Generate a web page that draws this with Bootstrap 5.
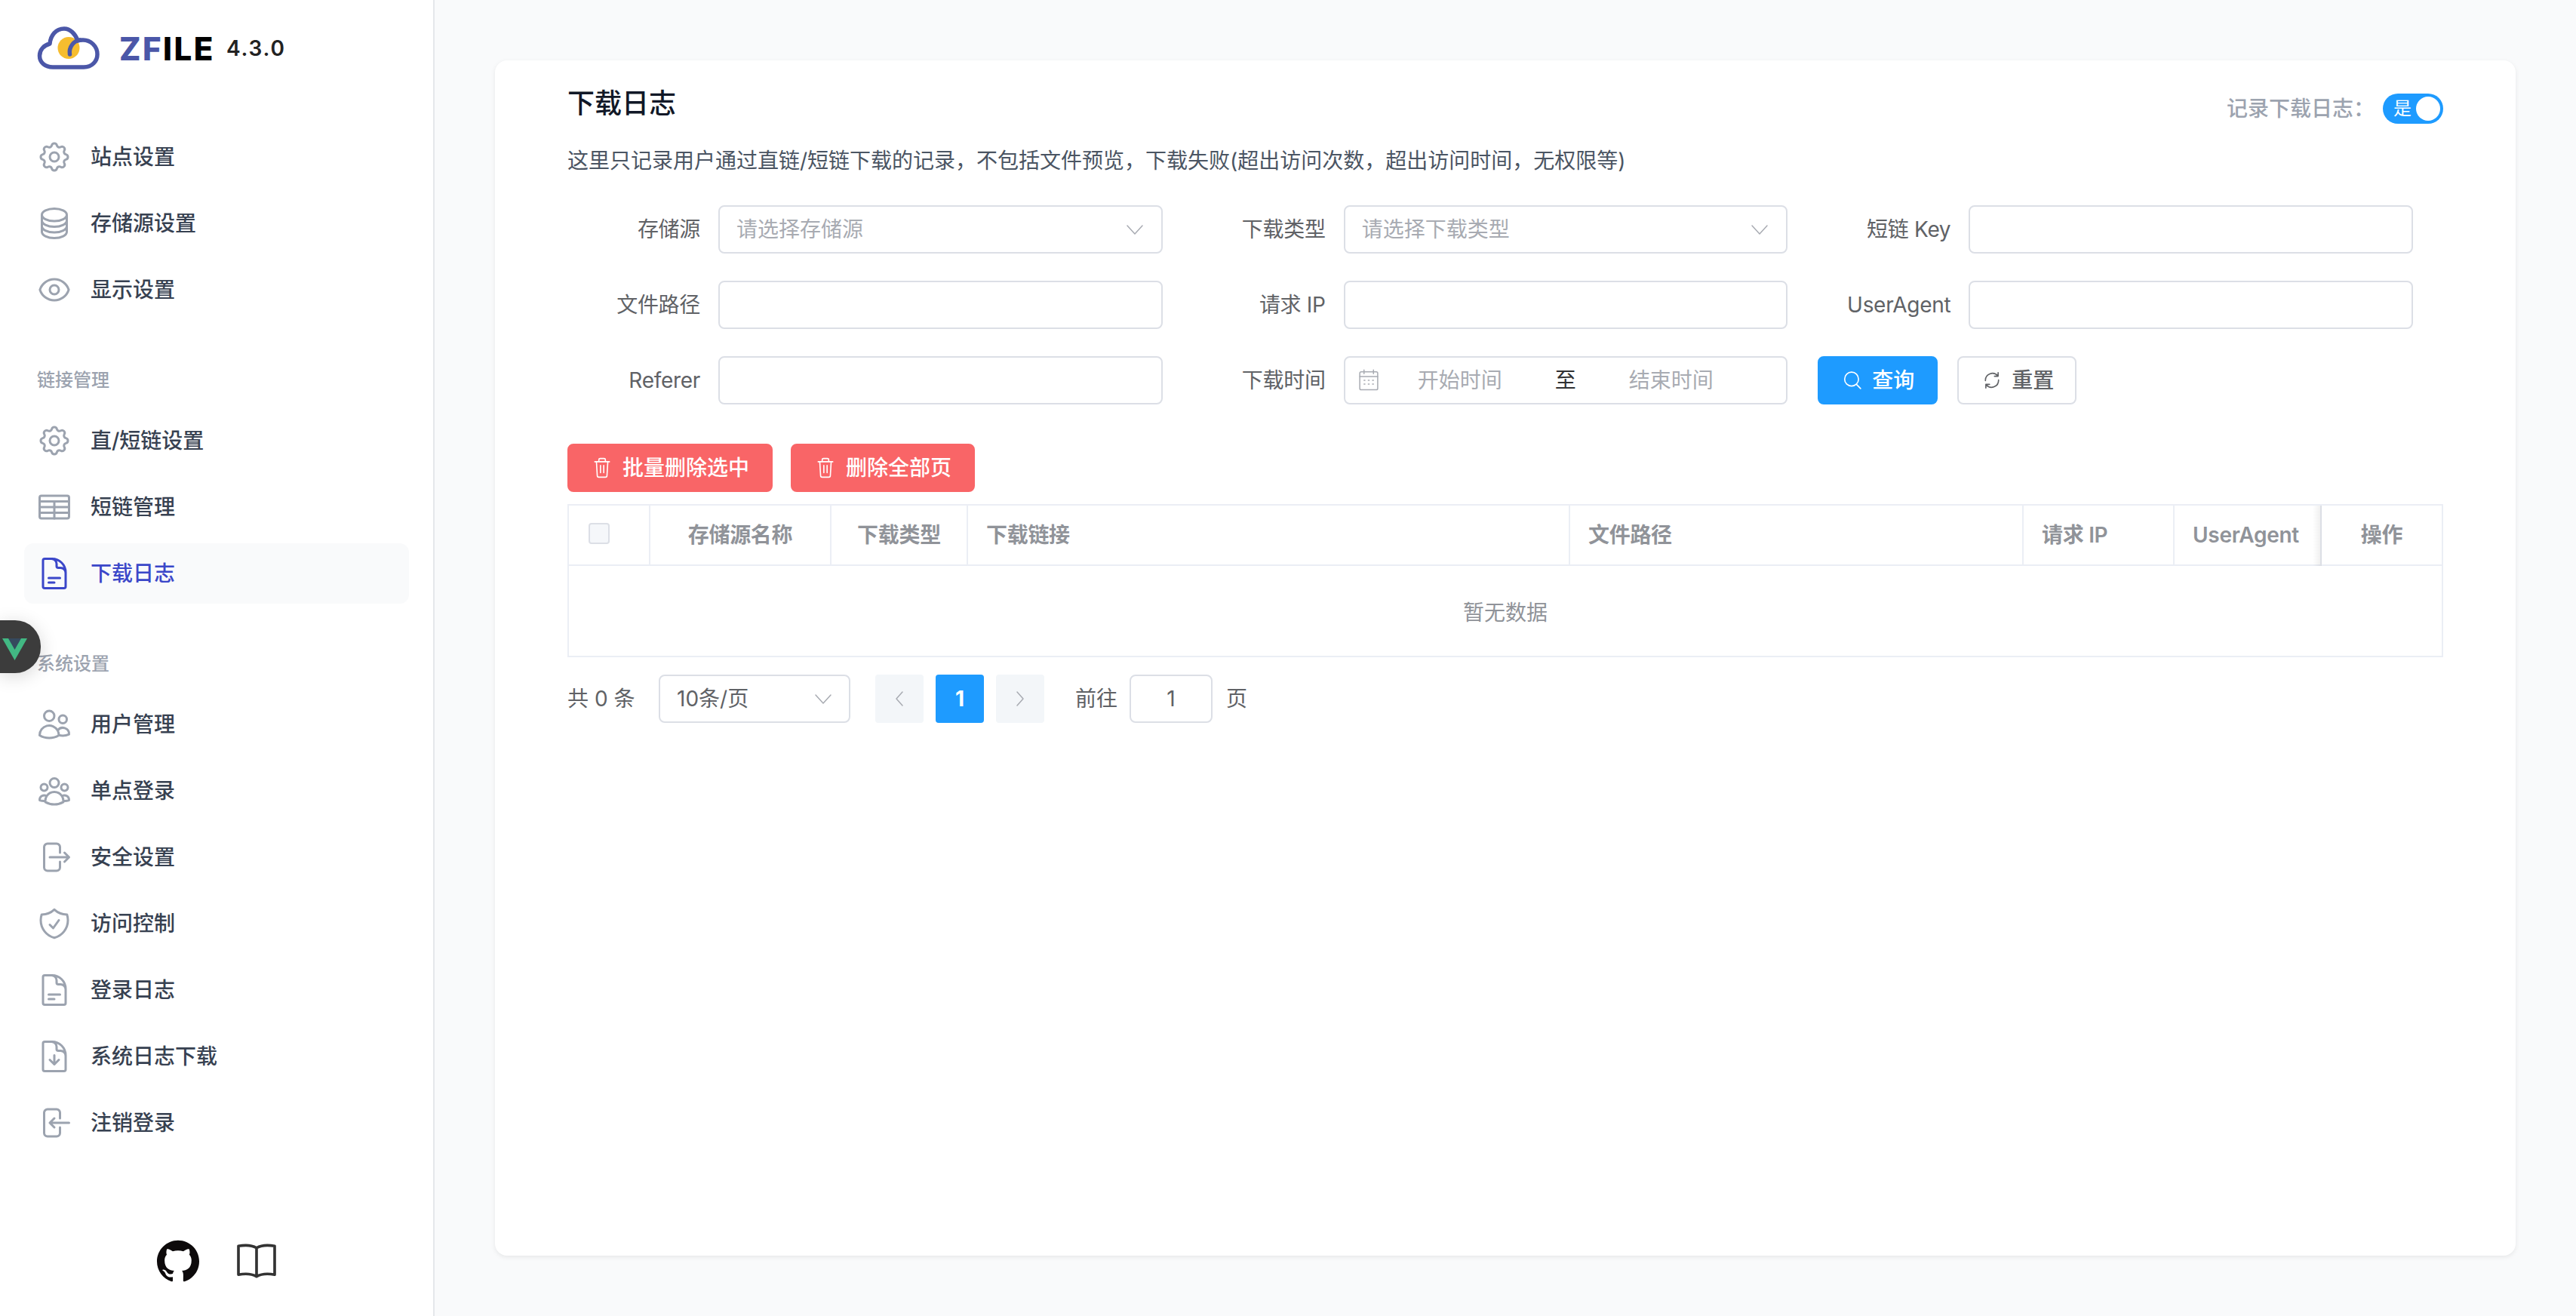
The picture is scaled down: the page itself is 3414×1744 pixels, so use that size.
<!DOCTYPE html>
<html lang="zh-CN">
<head>
<meta charset="utf-8">
<title>ZFILE 下载日志</title>
<link href="https://cdn.jsdelivr.net/npm/bootstrap@5.3.0/dist/css/bootstrap.min.css" rel="stylesheet">
<style>
html,body{height:100%;overflow:hidden}
body{font-family:Inter,"Noto Sans CJK SC",sans-serif;font-size:28px;background:#f9fafb;color:#606266;line-height:1.5}
.shell{height:1744px}
.side{width:576px;flex:none;background:#fff;border-right:2px solid #e5e7eb;padding:0 32px}
.brand{height:168px;padding:33px 0 0 16px;align-items:flex-start}
.brand-logo{width:86px;height:62px;flex:none}
.brand-name{font-family:Inter,sans-serif;font-weight:800;font-size:42px;line-height:1;letter-spacing:2.5px;margin:11px 0 0 24px;color:#000}
.brand-name span{color:#4b57a8}
.brand-ver{font-family:Inter,sans-serif;font-weight:600;font-size:28px;line-height:1;letter-spacing:1.8px;margin:17px 0 0 15px;color:#222}
.menu-item{height:80px;margin-bottom:8px;padding-left:16px;border-radius:12px;font-weight:500;color:#374151;text-decoration:none;gap:24px}
.menu-item.on{background:#f9fafb;color:#3b47c9}
.menu-item svg{width:48px;height:48px;flex:none;stroke:#9ca3af;fill:none;stroke-width:1.5;stroke-linecap:round;stroke-linejoin:round}
.menu-item.on svg{stroke:#3b47c9}
.menu-head{height:32px;margin:56px 0 24px 17px;font-size:24px;line-height:32px;color:#9ca3af;font-weight:500}
.side-foot{margin-top:auto;height:144px;gap:50px;padding-bottom:2px}
.vue-tab{position:absolute;left:0;top:822px;width:54px;height:70px;background:#3c3c3c;border-radius:0 34px 34px 0;box-shadow:0 4px 24px rgba(0,0,0,.16);z-index:5}
.vue-tab svg{position:absolute;left:3px;top:24px;width:33px;height:29px}
.main-area{padding:80px;min-width:0}
.panel{height:1584px;background:#fff;border-radius:16px;box-shadow:0 2px 6px rgba(0,0,0,.08);padding:29px 96px 0}
.page-title{font-size:36px;line-height:56px;font-weight:500;color:#111827;margin:0}
.rec-switch{margin-top:15px;gap:30px;color:#9ca3af;font-weight:500;line-height:40px}
.rec-text{width:177px;white-space:nowrap}
.sw{width:80px;height:40px;border-radius:20px;background:#1e9bff;color:#fff;font-size:24px;line-height:40px;padding-left:14px;position:relative;font-weight:400}
.sw i{position:absolute;right:4px;top:4px;width:32px;height:32px;border-radius:50%;background:#fff}
.page-desc{margin:24px 0 35px;line-height:48px;color:#4b5563}
.frm-row{margin-bottom:36px;--bs-gutter-x:0;--bs-gutter-y:0}
.frm-cell{padding-right:40px}
.frm-label{width:200px;flex:none;text-align:right;padding-right:24px;line-height:64px;color:#606266;white-space:nowrap;letter-spacing:-.3px}
.frm-ctl{height:64px;border:2px solid #dcdfe6;border-radius:8px;background:#fff;padding:0 22px;font-size:28px;color:#a8abb2;min-width:0}
.frm-ctl svg{width:24px;height:24px;flex:none;fill:none;stroke:#a8abb2;stroke-width:1.5;stroke-linecap:round;stroke-linejoin:round}
.frm-ctl .chev{margin-right:1px}
.frm-input{box-shadow:none!important}
.date-ctl{padding:0 18px 0 16px}
.date-ctl .cal{width:30px;height:30px;stroke-width:1.2}
.date-ctl .to{color:#303133;width:26px;margin:0 72px 0 70px;flex:none}
.date-ctl .d1{margin-left:50px;width:112px;flex:none}
.b-base{height:64px;border-radius:8px;font-size:28px;font-weight:500;display:inline-flex;align-items:center;padding:0;border:2px solid transparent;line-height:1}
.b-base svg{fill:none;stroke:currentColor;stroke-width:1.5;stroke-linecap:round;stroke-linejoin:round;flex:none}
.b-query{width:159px;margin-left:0;background:#1e9bff;border-color:#1e9bff;color:#fff;padding-left:31px;gap:13px}
.b-reset{width:158px;margin-left:26px;background:#fff;border-color:#dcdfe6;color:#606266;padding-left:31px;gap:13px}
.b-del{background:#f96567;border-color:#f96567;color:#fff;padding:0 29px 0 31px;gap:14px}
.b-del svg{width:26px;height:28px}
.b-query svg,.b-reset svg{width:26px;height:26px}
.del-bar{margin-top:52px;gap:24px;margin-bottom:16px}
.grid-wrap{border:2px solid #ebeef5;position:relative}
.log-grid{table-layout:fixed;width:100%;border-collapse:separate;border-spacing:0;margin:0}
.log-grid th{height:80px;padding:0 24px;border-bottom:2px solid #ebeef5;border-right:2px solid #ebeef5;color:#909399;font-weight:600;font-size:28px;line-height:1;white-space:nowrap;background:#fff;position:relative;vertical-align:middle;letter-spacing:-.3px}
.log-grid th:last-child{border-right:0}
.log-grid td{height:119px;text-align:center;color:#909399;vertical-align:middle;padding:4px 0 0;border:0}
.c0{width:108px}.c1{width:240px}.c2{width:181px}.c3{width:798px}.c4{width:601px}.c5{width:200px}.c6{width:195px}
.ta-c{text-align:center}
.fix-col::before{content:"";position:absolute;left:-12px;top:0;bottom:-2px;width:12px;background:linear-gradient(to left,rgba(0,0,0,.07),rgba(0,0,0,0))}
.ck{display:block;width:28px;height:28px;border:2px solid #dcdfe6;border-radius:4px;background:#f5f7fa;margin:-4px 0 0 2px}
.pg{margin-top:23px;height:64px;color:#606266}
.pg-total{width:121px;flex:none}
.pg-size{width:254px;padding:0 22px 0 22px;color:#606266;flex:none}
.pg-btn{width:64px;height:64px;border-radius:4px;background:#f3f6f9;color:#a8abb2;flex:none}
.pg-btn svg{width:24px;height:24px;fill:none;stroke:#a8abb2;stroke-width:1.5;stroke-linecap:round;stroke-linejoin:round}
.pg-btn.on{background:#1e9bff;color:#fff;font-weight:700}
.pg-list{gap:16px;margin-left:33px}
.pg-go{margin:0 16px 0 41px}
.pg-num{width:110px;height:64px;border:2px solid #dcdfe6;border-radius:8px;color:#606266;flex:none}
.pg-end{margin-left:18px}
</style>
</head>
<body>
<div class="shell d-flex position-relative">
  <aside class="side d-flex flex-column">
    <div class="brand d-flex">
      <svg class="brand-logo" viewBox="48 33 86 62" aria-hidden="true"><circle cx="91" cy="63.500" r="14.500" fill="#f6bd2f"/><path d="M70 89H111C122 89 129 81 129 72C129 61 120 53 110 53C107 53 105 53 103 54C100 45 93 38 85 38C74 38 67 47 66 58C58 60 52.500 66 52.500 74C52.500 83 60 89 70 89Z" fill="none" stroke="#4b57a8" stroke-width="5.500" stroke-linejoin="round"/><path d="M92.500 72C91 62 98 54 106 53" fill="none" stroke="#4b57a8" stroke-width="5.500" stroke-linecap="round"/></svg>
      <div class="brand-name"><span>ZF</span>ILE</div>
      <div class="brand-ver">4.3.0</div>
    </div>
    <a class="menu-item d-flex align-items-center" href="#"><svg viewBox="0 0 24 24"><path d="M10.325 4.317c.426-1.756 2.924-1.756 3.35 0a1.724 1.724 0 002.573 1.066c1.543-.94 3.31.826 2.37 2.37a1.724 1.724 0 001.065 2.572c1.756.426 1.756 2.924 0 3.35a1.724 1.724 0 00-1.066 2.573c.94 1.543-.826 3.31-2.37 2.37a1.724 1.724 0 00-2.572 1.065c-.426 1.756-2.924 1.756-3.35 0a1.724 1.724 0 00-2.573-1.066c-1.543.94-3.31-.826-2.37-2.37a1.724 1.724 0 00-1.065-2.572c-1.756-.426-1.756-2.924 0-3.35a1.724 1.724 0 001.066-2.573c-.94-1.543.826-3.31 2.37-2.37.996.608 2.296.07 2.572-1.065z"/><path d="M15 12a3 3 0 11-6 0 3 3 0 016 0z"/></svg>站点设置</a>
    <a class="menu-item d-flex align-items-center" href="#"><svg viewBox="0 0 24 24"><path d="M20.25 6.375c0 2.278-3.694 4.125-8.25 4.125S3.75 8.653 3.75 6.375m16.5 0c0-2.278-3.694-4.125-8.25-4.125S3.75 4.097 3.75 6.375m16.5 0v11.25c0 2.278-3.694 4.125-8.25 4.125s-8.25-1.847-8.25-4.125V6.375m16.5 0v3.75m-16.5-3.75v3.75m16.5 0v3.75C20.25 16.153 16.556 18 12 18s-8.25-1.847-8.25-4.125v-3.75m16.5 0c0 2.278-3.694 4.125-8.25 4.125s-8.25-1.847-8.25-4.125"/></svg>存储源设置</a>
    <a class="menu-item d-flex align-items-center" href="#"><svg viewBox="0 0 24 24"><path d="M15 12a3 3 0 11-6 0 3 3 0 016 0z"/><path d="M2.458 12C3.732 7.943 7.523 5 12 5c4.478 0 8.268 2.943 9.542 7-1.274 4.057-5.064 7-9.542 7-4.477 0-8.268-2.943-9.542-7z"/></svg>显示设置</a>
    <div class="menu-head">链接管理</div>
    <a class="menu-item d-flex align-items-center" href="#"><svg viewBox="0 0 24 24"><path d="M10.325 4.317c.426-1.756 2.924-1.756 3.35 0a1.724 1.724 0 002.573 1.066c1.543-.94 3.31.826 2.37 2.37a1.724 1.724 0 001.065 2.572c1.756.426 1.756 2.924 0 3.35a1.724 1.724 0 00-1.066 2.573c.94 1.543-.826 3.31-2.37 2.37a1.724 1.724 0 00-2.572 1.065c-.426 1.756-2.924 1.756-3.35 0a1.724 1.724 0 00-2.573-1.066c-1.543.94-3.31-.826-2.37-2.37a1.724 1.724 0 00-1.065-2.572c-1.756-.426-1.756-2.924 0-3.35a1.724 1.724 0 001.066-2.573c-.94-1.543.826-3.31 2.37-2.37.996.608 2.296.07 2.572-1.065z"/><path d="M15 12a3 3 0 11-6 0 3 3 0 016 0z"/></svg>直/短链设置</a>
    <a class="menu-item d-flex align-items-center" href="#"><svg viewBox="0 0 24 24"><rect x="2.250" y="4.500" width="19.500" height="15" rx="1.200"/><path d="M2.250 8.250h19.500M2.250 12h19.500M2.250 15.750h19.500M12 8.250V19.500"/></svg>短链管理</a>
    <a class="menu-item on d-flex align-items-center" href="#"><svg viewBox="0 0 24 24"><path d="M19.5 14.25v-2.625a3.375 3.375 0 00-3.375-3.375h-1.5A1.125 1.125 0 0113.5 7.125v-1.5a3.375 3.375 0 00-3.375-3.375H8.25m0 12.75h7.5m-7.5 3H12M10.500 2.250H5.625c-.621 0-1.125.504-1.125 1.125v17.25c0 .621.504 1.125 1.125 1.125h12.75c.621 0 1.125-.504 1.125-1.125V11.25a9 9 0 00-9-9z"/></svg>下载日志</a>
    <div class="menu-head">系统设置</div>
    <a class="menu-item d-flex align-items-center" href="#"><svg viewBox="0 0 24 24"><path d="M15 19.128a9.38 9.38 0 002.625.372 9.337 9.337 0 004.121-.952 4.125 4.125 0 00-7.533-2.493M15 19.128v-.003c0-1.113-.285-2.16-.786-3.07M15 19.128v.106A12.318 12.318 0 018.624 21c-2.331 0-4.512-.645-6.374-1.766l-.001-.109a6.375 6.375 0 0111.964-3.07M12 6.375a3.375 3.375 0 11-6.75 0 3.375 3.375 0 016.75 0zm8.25 2.25a2.625 2.625 0 11-5.25 0 2.625 2.625 0 015.25 0z"/></svg>用户管理</a>
    <a class="menu-item d-flex align-items-center" href="#"><svg viewBox="0 0 24 24"><path d="M18 18.72a9.094 9.094 0 003.741-.479 3 3 0 00-4.682-2.72m.94 3.198l.001.031c0 .225-.012.447-.037.666A11.944 11.944 0 0112 21c-2.17 0-4.207-.576-5.963-1.584A6.062 6.062 0 016 18.719m12 0a5.971 5.971 0 00-.941-3.197m0 0A5.995 5.995 0 0012 12.75a5.995 5.995 0 00-5.058 2.772m0 0a3 3 0 00-4.681 2.72 8.986 8.986 0 003.74.477m.94-3.197a5.971 5.971 0 00-.94 3.197M15 6.75a3 3 0 11-6 0 3 3 0 016 0zm6 3a2.25 2.25 0 11-4.5 0 2.25 2.25 0 014.5 0zm-13.5 0a2.25 2.25 0 11-4.5 0 2.25 2.25 0 014.5 0z"/></svg>单点登录</a>
    <a class="menu-item d-flex align-items-center" href="#"><svg viewBox="0 0 24 24"><path d="M15.75 9V5.25A2.25 2.25 0 0013.5 3h-6a2.25 2.25 0 00-2.25 2.25v13.5A2.25 2.25 0 007.5 21h6a2.25 2.25 0 002.25-2.25V15m3 0l3-3m0 0l-3-3m3 3H9"/></svg>安全设置</a>
    <a class="menu-item d-flex align-items-center" href="#"><svg viewBox="0 0 24 24"><path d="M9 12.75L11.25 15 15 9.75m-3-7.036A11.959 11.959 0 013.598 6 11.99 11.99 0 003 9.749c0 5.592 3.824 10.29 9 11.623 5.176-1.332 9-6.03 9-11.622 0-1.31-.21-2.571-.598-3.751h-.152c-3.196 0-6.1-1.248-8.25-3.285z"/></svg>访问控制</a>
    <a class="menu-item d-flex align-items-center" href="#"><svg viewBox="0 0 24 24"><path d="M19.5 14.25v-2.625a3.375 3.375 0 00-3.375-3.375h-1.5A1.125 1.125 0 0113.5 7.125v-1.5a3.375 3.375 0 00-3.375-3.375H8.25m0 12.75h7.5m-7.5 3H12M10.500 2.250H5.625c-.621 0-1.125.504-1.125 1.125v17.25c0 .621.504 1.125 1.125 1.125h12.75c.621 0 1.125-.504 1.125-1.125V11.25a9 9 0 00-9-9z"/></svg>登录日志</a>
    <a class="menu-item d-flex align-items-center" href="#"><svg viewBox="0 0 24 24"><path d="M19.5 14.25v-2.625a3.375 3.375 0 00-3.375-3.375h-1.5A1.125 1.125 0 0113.5 7.125v-1.5a3.375 3.375 0 00-3.375-3.375H8.25m.75 12l3 3m0 0l3-3m-3 3v-6m-1.5-9H5.625c-.621 0-1.125.504-1.125 1.125v17.25c0 .621.504 1.125 1.125 1.125h12.75c.621 0 1.125-.504 1.125-1.125V11.25a9 9 0 00-9-9z"/></svg>系统日志下载</a>
    <a class="menu-item d-flex align-items-center" href="#"><svg viewBox="0 0 24 24"><path d="M15.75 9V5.25A2.25 2.25 0 0013.5 3h-6a2.25 2.25 0 00-2.25 2.25v13.5A2.25 2.25 0 007.5 21h6a2.25 2.25 0 002.25-2.25V15M12 9l-3 3m0 0l3 3m-3-3h12.75"/></svg>注销登录</a>
    <div class="side-foot d-flex justify-content-center align-items-center">
      <svg width="56" height="56" viewBox="0 0 24 24" fill="#0d0a0b" aria-hidden="true"><path d="M12 .297c-6.63 0-12 5.373-12 12 0 5.303 3.438 9.8 8.205 11.385.6.113.82-.258.82-.577 0-.285-.01-1.04-.015-2.04-3.338.724-4.042-1.61-4.042-1.61C4.422 18.07 3.633 17.7 3.633 17.7c-1.087-.744.084-.729.084-.729 1.205.084 1.838 1.236 1.838 1.236 1.07 1.835 2.809 1.305 3.495.998.108-.776.417-1.305.76-1.605-2.665-.3-5.466-1.332-5.466-5.93 0-1.31.465-2.38 1.235-3.22-.135-.303-.54-1.523.105-3.176 0 0 1.005-.322 3.3 1.23.96-.267 1.98-.399 3-.405 1.02.006 2.04.138 3 .405 2.28-1.552 3.285-1.23 3.285-1.23.645 1.653.24 2.873.12 3.176.765.84 1.23 1.91 1.23 3.22 0 4.61-2.805 5.625-5.475 5.92.42.36.81 1.096.81 2.22 0 1.606-.015 2.896-.03 3.286 0 .315.21.69.825.57C20.565 22.092 24 17.592 24 12.297c0-6.627-5.373-12-12-12"/></svg>
      <svg width="52" height="48" viewBox="0 0 54 50" fill="none" stroke="#333" stroke-width="3.800" stroke-linejoin="round" aria-hidden="true"><path d="M27 7C20 3 10 3 2 4.500V44c8-1.500 18-1.500 25 2.500 7-4 17-4 25-2.500V4.500C44 3 34 3 27 7zM27 7v39.500"/></svg>
    </div>
  </aside>
  <div class="vue-tab"><svg viewBox="0 0 33 29"><path d="M0 0h33L16.500 29z" fill="#42b883"/><path d="M8 0h17l-8.500 15z" fill="#35495e"/></svg></div>
  <main class="main-area flex-grow-1">
    <section class="panel">
      <div class="d-flex justify-content-between align-items-start">
        <h1 class="page-title">下载日志</h1>
        <div class="rec-switch d-flex align-items-center"><span class="rec-text">记录下载日志：</span><span class="sw">是<i></i></span></div>
      </div>
      <p class="page-desc">这里只记录用户通过直链/短链下载的记录，不包括文件预览，下载失败(超出访问次数，超出访问时间，无权限等)</p>

      <div class="row frm-row">
        <div class="col-4 frm-cell d-flex"><label class="frm-label">存储源</label><div class="frm-ctl flex-grow-1 d-flex align-items-center justify-content-between"><span>请选择存储源</span><svg class="chev" viewBox="0 0 24 24"><path d="M2 7l10 11L22 7"/></svg></div></div>
        <div class="col-4 frm-cell d-flex"><label class="frm-label">下载类型</label><div class="frm-ctl flex-grow-1 d-flex align-items-center justify-content-between"><span>请选择下载类型</span><svg class="chev" viewBox="0 0 24 24"><path d="M2 7l10 11L22 7"/></svg></div></div>
        <div class="col-4 frm-cell d-flex"><label class="frm-label">短链 Key</label><input class="frm-ctl frm-input flex-grow-1" type="text"></div>
      </div>
      <div class="row frm-row">
        <div class="col-4 frm-cell d-flex"><label class="frm-label">文件路径</label><input class="frm-ctl frm-input flex-grow-1" type="text"></div>
        <div class="col-4 frm-cell d-flex"><label class="frm-label">请求 IP</label><input class="frm-ctl frm-input flex-grow-1" type="text"></div>
        <div class="col-4 frm-cell d-flex"><label class="frm-label">UserAgent</label><input class="frm-ctl frm-input flex-grow-1" type="text"></div>
      </div>
      <div class="row frm-row mb-0">
        <div class="col-4 frm-cell d-flex"><label class="frm-label">Referer</label><input class="frm-ctl frm-input flex-grow-1" type="text"></div>
        <div class="col-4 frm-cell d-flex"><label class="frm-label">下载时间</label><div class="frm-ctl date-ctl flex-grow-1 d-flex align-items-center"><svg class="cal" viewBox="0 0 24 24"><rect x="2.500" y="3" width="19" height="19" rx="1.500"/><path d="M2.500 8h19M7 1v4M17 1v4M7 12h1M11.500 12h1M16 12h1M7 16h1M11.500 16h1M16 16h1"/></svg><span class="d1">开始时间</span><span class="to">至</span><span>结束时间</span></div></div>
        <div class="col-4 d-flex">
          <button class="btn b-base b-query" type="button"><svg viewBox="0 0 24 24"><circle cx="11" cy="10.500" r="8.500"/><path d="M17 17l5 5"/></svg>查询</button>
          <button class="btn b-base b-reset" type="button"><svg viewBox="0 0 24 24"><path d="M4 12.500A8.500 8.500 0 0 1 19 6.500M20 11.500A8.500 8.500 0 0 1 5 17.500M19.500 2.500v4.500H15M4.500 21.500V17H9"/></svg>重置</button>
        </div>
      </div>

      <div class="del-bar d-flex">
        <button class="btn b-base b-del" type="button"><svg viewBox="0 0 24 26"><path d="M3 5.500h18M8 5.500V3a1.500 1.500 0 0 1 1.500-1.500h5A1.500 1.500 0 0 1 16 3v2.500M5 5.500l1 17a2 2 0 0 0 2 2h8a2 2 0 0 0 2-2l1-17M10 10v9M14 10v9"/></svg>批量删除选中</button>
        <button class="btn b-base b-del" type="button"><svg viewBox="0 0 24 26"><path d="M3 5.500h18M8 5.500V3a1.500 1.500 0 0 1 1.500-1.500h5A1.500 1.500 0 0 1 16 3v2.500M5 5.500l1 17a2 2 0 0 0 2 2h8a2 2 0 0 0 2-2l1-17M10 10v9M14 10v9"/></svg>删除全部页</button>
      </div>

      <div class="grid-wrap">
        <table class="log-grid">
          <colgroup><col class="c0"><col class="c1"><col class="c2"><col class="c3"><col class="c4"><col class="c5"><col class="c6"><col></colgroup>
          <thead><tr>
            <th><span class="ck"></span></th>
            <th class="ta-c">存储源名称</th>
            <th class="ta-c">下载类型</th>
            <th>下载链接</th>
            <th>文件路径</th>
            <th>请求 IP</th>
            <th>UserAgent</th>
            <th class="ta-c fix-col">操作</th>
          </tr></thead>
          <tbody><tr><td colspan="8">暂无数据</td></tr></tbody>
        </table>
      </div>

      <div class="pg d-flex align-items-center">
        <span class="pg-total">共 0 条</span>
        <div class="frm-ctl pg-size d-flex align-items-center justify-content-between"><span>10条/页</span><svg viewBox="0 0 24 24"><path d="M2 7l10 11L22 7"/></svg></div>
        <div class="pg-list d-flex">
          <span class="pg-btn d-flex align-items-center justify-content-center"><svg viewBox="0 0 24 24"><path d="M16 3l-8 9 8 9"/></svg></span>
          <span class="pg-btn on d-flex align-items-center justify-content-center">1</span>
          <span class="pg-btn d-flex align-items-center justify-content-center"><svg viewBox="0 0 24 24"><path d="M8 3l8 9-8 9"/></svg></span>
        </div>
        <span class="pg-go">前往</span>
        <span class="pg-num d-flex align-items-center justify-content-center">1</span>
        <span class="pg-end">页</span>
      </div>
    </section>
  </main>
</div>
<script src="https://cdn.jsdelivr.net/npm/bootstrap@5.3.0/dist/js/bootstrap.bundle.min.js"></script>
</body>
</html>
